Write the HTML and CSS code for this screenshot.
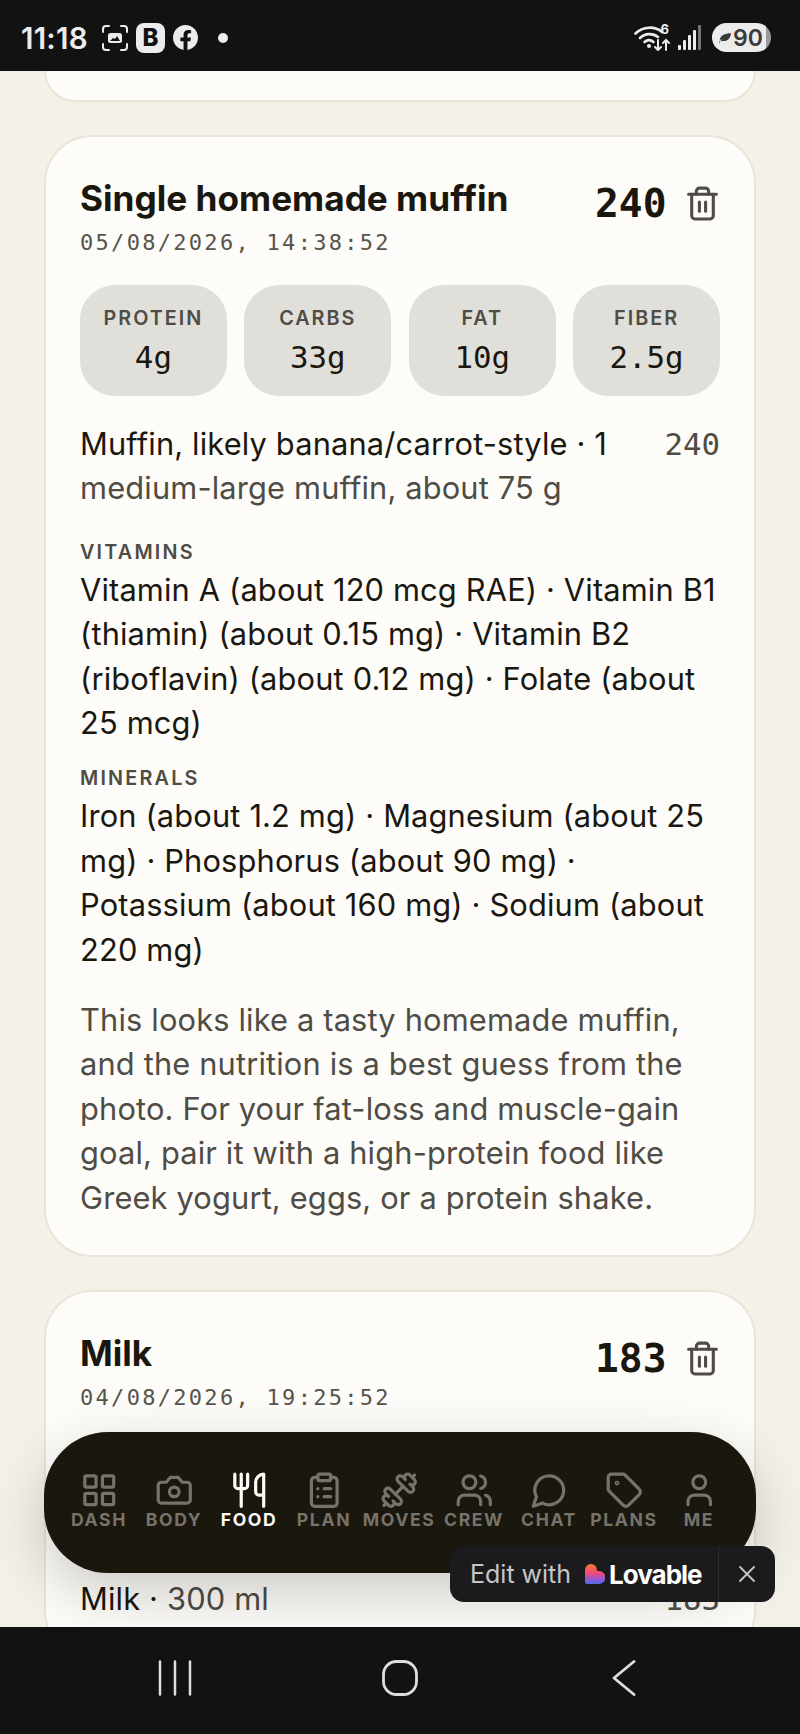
FILE: index.html
```html
<!DOCTYPE html>
<html lang="en">
<head>
  <meta charset="UTF-8">
  <meta name="viewport" content="width=device-width, initial-scale=1.0">
  <title>Food log</title>
  <link rel="stylesheet" href="styles.css">
</head>
<body>
<div class="screen">

  <div class="status-bar">
    <div class="status-left">
      <span class="clock">11:18</span>
      <svg class="capture-icon" viewBox="0 0 26 26" fill="none" stroke="currentColor" stroke-width="2" stroke-linecap="round">
        <path d="M1 7V4a3 3 0 0 1 3-3h3M19 1h3a3 3 0 0 1 3 3v3M25 19v3a3 3 0 0 1-3 3h-3M7 25H4a3 3 0 0 1-3-3v-3"/>
        <rect x="6" y="8" width="14" height="10" rx="2.5" fill="currentColor" stroke="none"/>
        <path d="M8 16l3-3 2 1 2-3 3 5z" fill="#121212" stroke="none"/>
      </svg>
      <span class="b-badge">B</span>
      <svg class="fb-icon" viewBox="0 0 24 24" fill="currentColor"><path d="M24 12.073c0-6.627-5.373-12-12-12s-12 5.373-12 12c0 5.990 4.388 10.954 10.125 11.854v-8.385H7.078v-3.470h3.047V9.430c0-3.007 1.792-4.669 4.533-4.669 1.312 0 2.686.235 2.686.235v2.953H15.830c-1.491 0-1.956.925-1.956 1.874v2.250h3.328l-.532 3.470h-2.796v8.385C19.612 23.027 24 18.062 24 12.073z"/></svg>
      <span class="status-dot"></span>
    </div>
    <div class="status-right">
      <div class="wifi">
        <svg class="wifi-icon" viewBox="0 0 36 26" fill="none" stroke="currentColor" stroke-linecap="round">
          <path d="M1.500 8.500C9 1 21 1 28 7" stroke-width="2.600"/>
          <path d="M6 13c5-5 13-5 18-1" stroke-width="2.600"/>
          <path d="M10.500 17c3-2.500 6-2.500 9 0" stroke-width="2.600"/>
          <circle cx="15" cy="21" r="2" fill="currentColor" stroke="none"/>
          <path d="M24 15v10m-3-3l3 3 3-3M32 25V15m-3 3l3-3 3 3" stroke-width="2"/>
        </svg>
        <span class="wifi-six">6</span>
      </div>
      <svg class="signal-icon" viewBox="0 0 24 26" fill="currentColor">
        <rect x="0" y="20" width="3" height="5" rx="1"/>
        <rect x="5" y="15" width="3" height="10" rx="1"/>
        <rect x="10" y="10" width="3" height="15" rx="1"/>
        <rect x="15" y="5" width="3" height="20" rx="1"/>
        <rect x="20" y="0" width="3" height="25" rx="1" opacity="0.45"/>
      </svg>
      <div class="battery">
        <svg class="leaf-icon" viewBox="0 0 16 14"><path d="M1 13c1-2 2-3 4-4-1 0-2 .5-3 1 0-5 6-8 13-8-1 6-4 9-9 9-1 0-2 0-3-.5L2 13z"/></svg>
        <span>90</span>
      </div>
    </div>
  </div>

  <div class="feed">
    <div class="card card-cut"></div>

    <div class="card">
      <div class="card-head">
        <div class="card-title">
          <h2>Single homemade muffin</h2>
          <p class="stamp">05/08/2026, 14:38:52</p>
        </div>
        <div class="card-kcal">
          <span class="kcal">240</span>
          <svg class="trash" viewBox="0 0 24 24" fill="none" stroke="currentColor" stroke-width="2" stroke-linecap="round" stroke-linejoin="round"><path d="M3 6h18"/><path d="M19 6v14c0 1-1 2-2 2H7c-1 0-2-1-2-2V6"/><path d="M8 6V4c0-1 1-2 2-2h4c1 0 2 1 2 2v2"/><path d="M10 11v6"/><path d="M14 11v6"/></svg>
        </div>
      </div>
      <div class="macros">
        <div class="macro"><span class="macro-name">PROTEIN</span><span class="macro-val">4g</span></div>
        <div class="macro"><span class="macro-name">CARBS</span><span class="macro-val">33g</span></div>
        <div class="macro"><span class="macro-name">FAT</span><span class="macro-val">10g</span></div>
        <div class="macro"><span class="macro-name">FIBER</span><span class="macro-val">2.5g</span></div>
      </div>
      <div class="item">
        <p class="item-name">Muffin, likely banana/carrot-style · 1 <span class="muted">medium-large muffin, about 75 g</span></p>
        <span class="item-kcal">240</span>
      </div>
      <h3 class="micro-label">VITAMINS</h3>
      <p class="micro-text">Vitamin A (about 120 mcg RAE) · Vitamin B1 (thiamin) (about 0.15 mg) · Vitamin B2 (riboflavin) (about 0.12 mg) · Folate (about 25 mcg)</p>
      <h3 class="micro-label micro-label-next">MINERALS</h3>
      <p class="micro-text">Iron (about 1.2 mg) · Magnesium (about 25 mg) · Phosphorus (about 90 mg) · Potassium (about 160 mg) · Sodium (about 220 mg)</p>
      <p class="note">This looks like a tasty homemade muffin, and the nutrition is a best guess from the photo. For your fat-loss and muscle-gain goal, pair it with a high-protein food like Greek yogurt, eggs, or a protein shake.</p>
    </div>

    <div class="card">
      <div class="card-head">
        <div class="card-title">
          <h2>Milk</h2>
          <p class="stamp">04/08/2026, 19:25:52</p>
        </div>
        <div class="card-kcal">
          <span class="kcal">183</span>
          <svg class="trash" viewBox="0 0 24 24" fill="none" stroke="currentColor" stroke-width="2" stroke-linecap="round" stroke-linejoin="round"><path d="M3 6h18"/><path d="M19 6v14c0 1-1 2-2 2H7c-1 0-2-1-2-2V6"/><path d="M8 6V4c0-1 1-2 2-2h4c1 0 2 1 2 2v2"/><path d="M10 11v6"/><path d="M14 11v6"/></svg>
        </div>
      </div>
      <div class="macros">
        <div class="macro"></div>
        <div class="macro"></div>
        <div class="macro"></div>
        <div class="macro"></div>
      </div>
      <div class="item">
        <p class="item-name">Milk · <span class="muted">300 ml</span></p>
        <span class="item-kcal">183</span>
      </div>
    </div>
  </div>

  <!-- floating tab bar -->
  <nav class="tabs">
    <div class="tab">
      <svg viewBox="0 0 24 24"><rect x="3" y="3" width="7" height="7" rx="1"/><rect x="14" y="3" width="7" height="7" rx="1"/><rect x="14" y="14" width="7" height="7" rx="1"/><rect x="3" y="14" width="7" height="7" rx="1"/></svg>
      <span>DASH</span>
    </div>
    <div class="tab">
      <svg viewBox="0 0 24 24"><path d="M14.500 4h-5L7 7H4a2 2 0 0 0-2 2v9a2 2 0 0 0 2 2h16a2 2 0 0 0 2-2V9a2 2 0 0 0-2-2h-3l-2.500-3z"/><circle cx="12" cy="13" r="3"/></svg>
      <span>BODY</span>
    </div>
    <div class="tab tab-on">
      <svg viewBox="0 0 24 24"><path d="M3 2v7c0 1.100.9 2 2 2h4a2 2 0 0 0 2-2V2"/><path d="M7 2v20"/><path d="M21 15V2a5 5 0 0 0-5 5v6c0 1.100.9 2 2 2h3Zm0 0v7"/></svg>
      <span>FOOD</span>
    </div>
    <div class="tab">
      <svg viewBox="0 0 24 24"><rect x="8" y="2" width="8" height="4" rx="1"/><path d="M16 4h2a2 2 0 0 1 2 2v14a2 2 0 0 1-2 2H6a2 2 0 0 1-2-2V6a2 2 0 0 1 2-2h2"/><path d="M12 11h4"/><path d="M12 16h4"/><path d="M8 11h.01"/><path d="M8 16h.01"/></svg>
      <span>PLAN</span>
    </div>
    <div class="tab">
      <svg class="flip" viewBox="0 0 24 24"><path d="M14.400 14.400 9.600 9.600"/><path d="M18.657 21.485a2 2 0 1 1-2.829-2.828l-1.767 1.768a2 2 0 1 1-2.829-2.829l6.364-6.364a2 2 0 1 1 2.829 2.829l-1.768 1.767a2 2 0 1 1 2.828 2.829z"/><path d="m21.500 21.500-1.400-1.400"/><path d="M3.900 3.900 2.500 2.500"/><path d="M6.404 12.768a2 2 0 1 1-2.829-2.829l1.768-1.767a2 2 0 1 1-2.828-2.829l2.828-2.828a2 2 0 1 1 2.829 2.828l1.767-1.768a2 2 0 1 1 2.829 2.829z"/></svg>
      <span>MOVES</span>
    </div>
    <div class="tab">
      <svg viewBox="0 0 24 24"><path d="M16 21v-2a4 4 0 0 0-4-4H6a4 4 0 0 0-4 4v2"/><circle cx="9" cy="7" r="4"/><path d="M22 21v-2a4 4 0 0 0-3-3.870"/><path d="M16 3.130a4 4 0 0 1 0 7.750"/></svg>
      <span>CREW</span>
    </div>
    <div class="tab">
      <svg viewBox="0 0 24 24"><path d="M7.900 20A9 9 0 1 0 4 16.100L2 22Z"/></svg>
      <span>CHAT</span>
    </div>
    <div class="tab">
      <svg viewBox="0 0 24 24"><path d="M12.586 2.586A2 2 0 0 0 11.172 2H4a2 2 0 0 0-2 2v7.172a2 2 0 0 0 .586 1.414l8.704 8.704a2.426 2.426 0 0 0 3.420 0l6.580-6.580a2.426 2.426 0 0 0 0-3.420z"/><circle cx="7.500" cy="7.500" r=".5"/></svg>
      <span>PLANS</span>
    </div>
    <div class="tab">
      <svg viewBox="0 0 24 24"><path d="M19 21v-2a4 4 0 0 0-4-4H9a4 4 0 0 0-4 4v2"/><circle cx="12" cy="7" r="4"/></svg>
      <span>ME</span>
    </div>
  </nav>

  <div class="lovable">
    <div class="lovable-main">
      <span class="lovable-edit">Edit with</span>
      <svg class="lovable-heart" viewBox="0 0 20 20">
        <defs>
          <linearGradient id="heart" x1="0" y1="0" x2="0" y2="1">
            <stop offset="0" stop-color="#fe7b2c"/>
            <stop offset="0.45" stop-color="#f2487c"/>
            <stop offset="0.8" stop-color="#8a58dc"/>
            <stop offset="1" stop-color="#4d6fe6"/>
          </linearGradient>
        </defs>
        <path d="M6 0a6 6 0 0 1 6 6v1h2a6.500 6.500 0 0 1 0 13H2a2 2 0 0 1-2-2V6a6 6 0 0 1 6-6z" fill="url(#heart)"/>
      </svg>
      <span class="lovable-name">Lovable</span>
    </div>
    <div class="lovable-close">
      <svg viewBox="0 0 24 24" fill="none" stroke="currentColor" stroke-width="1.800" stroke-linecap="round"><path d="M5 5l14 14M19 5L5 19"/></svg>
    </div>
  </div>

  <div class="system-nav">
    <svg class="sys-recent" viewBox="0 0 34 36" fill="none" stroke="currentColor" stroke-width="2.500" stroke-linecap="round"><path d="M2 1.500v33M17 1.500v33M32 1.500v33"/></svg>
    <svg class="sys-home" viewBox="0 0 36 36" fill="none" stroke="currentColor" stroke-width="2.800"><rect x="1.500" y="1.500" width="33" height="33" rx="13"/></svg>
    <svg class="sys-back" viewBox="0 0 24 36" fill="none" stroke="currentColor" stroke-width="2.800" stroke-linecap="round" stroke-linejoin="round"><path d="M22 1.500L2 18l20 16.500"/></svg>
  </div>

</div>
</body>
</html>
```

FILE: styles.css
```css
* {
  box-sizing: border-box;
}

html, body {
  margin: 0;
  padding: 0;
  background: #f4f1e8;
}

h2, h3, p {
  margin: 0;
  font: inherit;
}

.screen {
  position: relative;
  width: 800px;
  height: 1734px;
  overflow: hidden;
  display: flex;
  flex-direction: column;
  font-family: Inter, "Liberation Sans", sans-serif;
  color: #1a170f;
}

/* status bar */
.status-bar {
  flex: none;
  height: 71px;
  background: #121212;
  color: #ececec;
  display: flex;
  justify-content: space-between;
  align-items: center;
  padding: 4px 29px 0 21px;
}

.status-left, .status-right {
  display: flex;
  align-items: center;
}

.clock {
  font-size: 29.500px;
  font-weight: 600;
  letter-spacing: 0.2px;
  width: 81px;
}

.capture-icon {
  width: 26px;
  height: 26px;
  margin-right: 8px;
}

.b-badge {
  width: 29px;
  height: 30px;
  border-radius: 8px;
  background: #ececec;
  color: #121212;
  font-weight: 800;
  font-size: 24px;
  line-height: 30px;
  text-align: center;
  margin-right: 8px;
}

.fb-icon {
  width: 25px;
  height: 25px;
  margin-right: 20px;
}

.status-dot {
  width: 10px;
  height: 10px;
  border-radius: 50%;
  background: #ececec;
}

.wifi {
  position: relative;
  width: 36px;
  height: 26px;
  margin-right: 8px;
}

.wifi-icon {
  display: block;
  width: 36px;
  height: 26px;
}

.wifi-six {
  position: absolute;
  right: 1px;
  top: -3px;
  font-size: 13px;
  font-weight: 700;
  line-height: 15px;
}

.signal-icon {
  width: 24px;
  height: 26px;
  margin-right: 10px;
}

.battery {
  width: 59px;
  height: 29px;
  border-radius: 15px;
  background: linear-gradient(90deg, #ececec 91%, #9a9a9a 91%);
  color: #3a3a3a;
  display: flex;
  align-items: center;
  padding-left: 6px;
  font-size: 23px;
  font-weight: 600;
}

.leaf-icon {
  width: 14px;
  height: 13px;
  fill: #3a3a3a;
  margin-right: 1px;
}

/* feed */
.feed {
  flex: 1;
  min-height: 0;
  overflow: hidden;
  padding: 0 44px;
  display: flex;
  flex-direction: column;
  gap: 33px;
}

.card {
  flex: none;
  background: #fdfcf9;
  border: 2px solid #e9e5d9;
  border-radius: 48px;
  padding: 39px 34px 35px;
}

.card-cut {
  height: 31px;
  padding: 0;
  border-top: 0;
  border-radius: 0 0 48px 48px;
}

.card-head {
  display: flex;
  justify-content: space-between;
  align-items: flex-start;
}

.card-title h2 {
  font-size: 35.200px;
  font-weight: 700;
  line-height: 44px;
}

.stamp {
  margin-top: 6px;
  font-family: "DejaVu Sans Mono", monospace;
  font-size: 22px;
  line-height: 33px;
  letter-spacing: 2.300px;
  color: #57544c;
}

.card-kcal {
  display: flex;
  align-items: center;
  gap: 17.500px;
  margin-right: -1px;
  margin-top: 5px;
}

.kcal {
  font-family: "DejaVu Sans Mono", monospace;
  font-size: 39.600px;
  font-weight: 700;
  line-height: 44px;
}

.trash {
  width: 37px;
  height: 37px;
  color: #4f4c45;
}

.macros {
  display: grid;
  grid-template-columns: repeat(4, 1fr);
  gap: 17.600px;
  margin-top: 26px;
}

.macro {
  height: 111px;
  border-radius: 35px;
  background: #e0dfda;
  display: flex;
  flex-direction: column;
  align-items: center;
  padding-top: 19px;
}

.macro-name {
  font-size: 19.800px;
  font-weight: 600;
  line-height: 28px;
  letter-spacing: 2px;
  color: #4f4c45;
}

.macro-val {
  margin-top: 5px;
  font-family: "DejaVu Sans Mono", monospace;
  font-size: 30.800px;
  line-height: 40px;
}

.item {
  display: flex;
  justify-content: space-between;
  gap: 36px;
  margin-top: 26px;
  font-size: 30.800px;
  line-height: 44.400px;
  letter-spacing: 0.16px;
}

.muted {
  color: #4f4c45;
}

.item-kcal {
  font-family: "DejaVu Sans Mono", monospace;
  letter-spacing: 0;
  color: #4f4c45;
}

.micro-label {
  margin-top: 27px;
  padding-bottom: 2px;
  font-size: 19.800px;
  font-weight: 600;
  line-height: 28px;
  letter-spacing: 2.200px;
  color: #4f4c45;
}

.micro-label-next {
  margin-top: 19px;
}

.micro-text {
  font-size: 30.800px;
  line-height: 44.400px;
  letter-spacing: 0.16px;
}

.note {
  margin-top: 26px;
  font-size: 30.800px;
  line-height: 44.400px;
  letter-spacing: 0.16px;
  color: #4f4c45;
}

/* floating tab bar */
.tabs {
  position: absolute;
  left: 44px;
  right: 44px;
  top: 1432px;
  height: 141px;
  padding: 39px 17.500px 0;
  border-radius: 64px;
  background: #1a170f;
  box-shadow: 0 20px 60px rgba(0, 0, 0, 0.2);
  display: grid;
  grid-template-columns: repeat(9, 75px);
  align-items: start;
}

.tab {
  display: flex;
  flex-direction: column;
  align-items: center;
  color: #77736a;
  font-size: 17.600px;
  font-weight: 700;
  line-height: 20px;
  letter-spacing: 1.600px;
  white-space: nowrap;
}

.tab svg {
  width: 38.500px;
  height: 38.500px;
  fill: none;
  stroke: currentColor;
  stroke-width: 2;
  stroke-linecap: round;
  stroke-linejoin: round;
}

.tab svg.flip {
  transform: scaleX(-1);
}

.tab-on {
  color: #fdfcf9;
}

/* editor badge */
.lovable {
  position: absolute;
  left: 450px;
  top: 1546px;
  width: 325px;
  height: 56px;
  border-radius: 14px;
  background: #1b1b1d;
  display: flex;
  align-items: center;
}

.lovable-main {
  flex: 1;
  height: 100%;
  display: flex;
  align-items: center;
  padding-left: 20px;
}

.lovable-edit {
  font-size: 25px;
  color: #c6c6c6;
  margin-right: 14px;
}

.lovable-heart {
  width: 20px;
  height: 20px;
  margin-right: 4px;
}

.lovable-name {
  font-size: 26px;
  font-weight: 700;
  letter-spacing: -1px;
  color: #fff;
}

.lovable-close {
  width: 57px;
  height: 100%;
  border-left: 1px solid #2c2c2e;
  color: #c6c6c6;
  display: flex;
  align-items: center;
  justify-content: center;
}

.lovable-close svg {
  width: 24px;
  height: 24px;
}

/* android nav */
.system-nav {
  flex: none;
  height: 107px;
  background: #121212;
  color: #dedede;
  display: flex;
  align-items: flex-start;
  padding: 33px 0 0 158px;
}

.sys-recent {
  width: 34px;
  height: 36px;
  margin-right: 190px;
}

.sys-home {
  width: 36px;
  height: 36px;
  margin-right: 194px;
}

.sys-back {
  width: 24px;
  height: 36px;
}
```
